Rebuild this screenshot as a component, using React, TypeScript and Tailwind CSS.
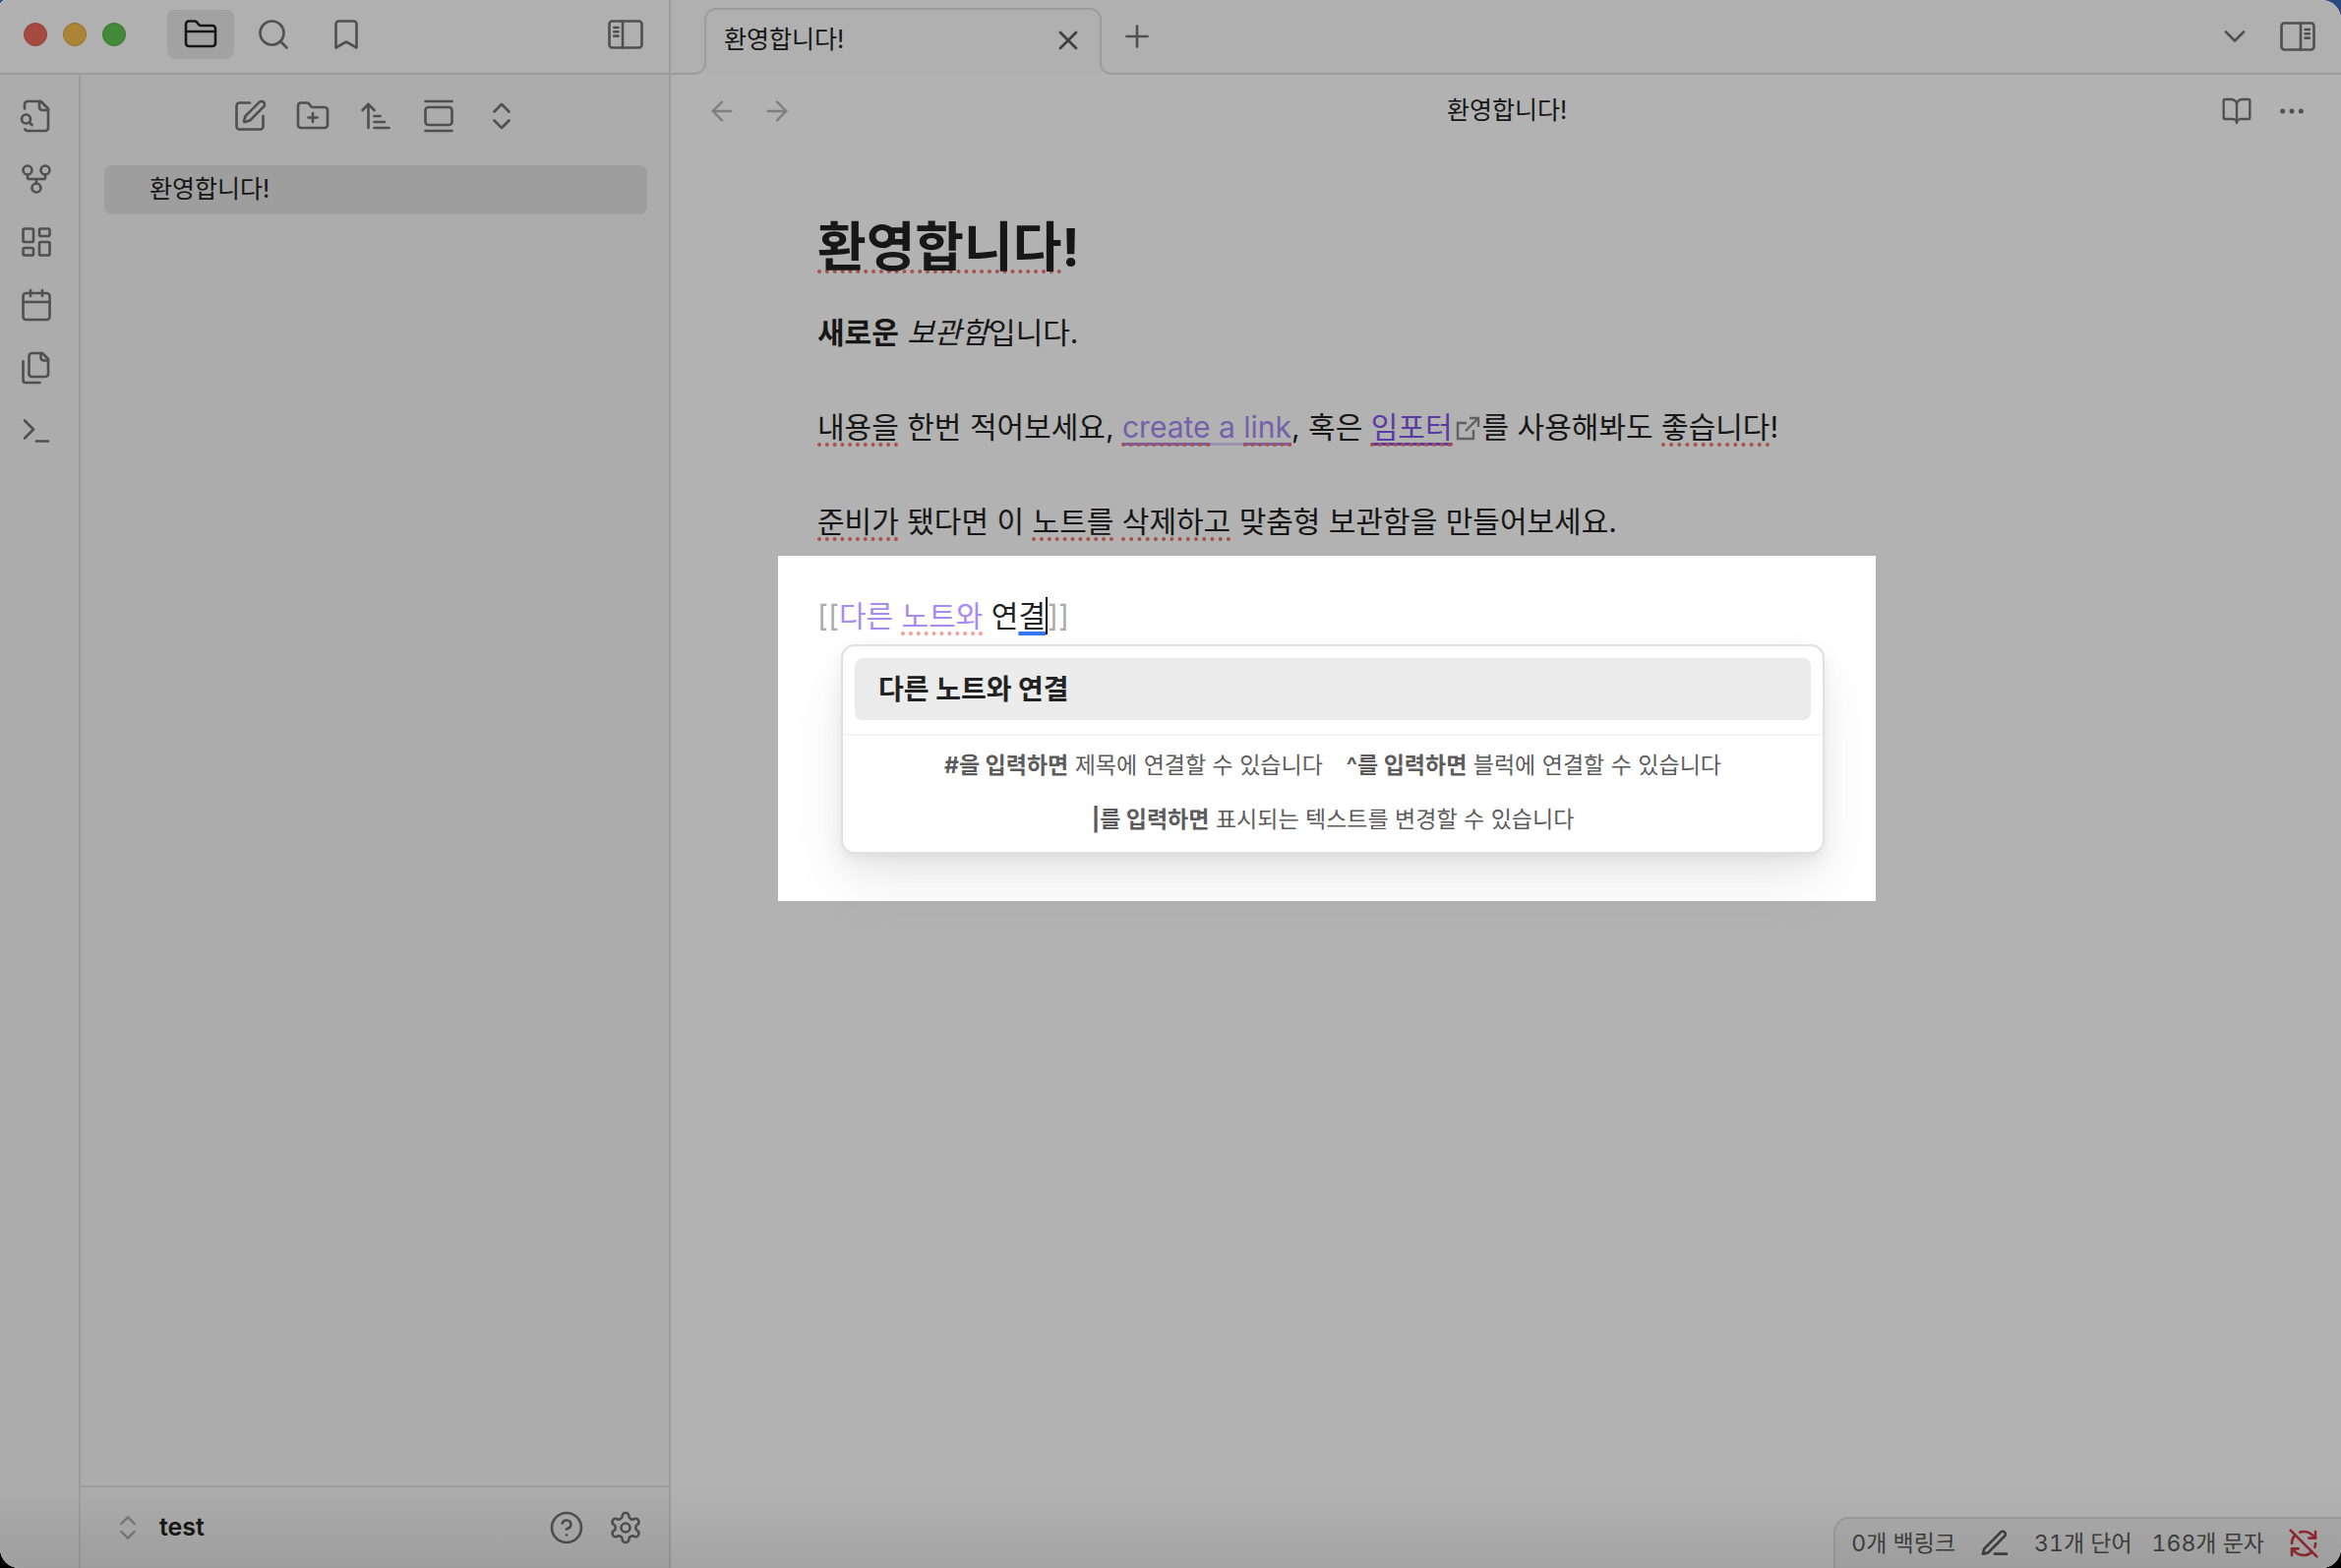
import React from 'react';

const Icon = ({size = 36, stroke = 1.75, children}: { size?: number; stroke?: number; children: React.ReactNode }) => (
    <svg
        width={size}
        height={size}
        viewBox="0 0 24 24"
        fill="none"
        stroke="currentColor"
        strokeWidth={stroke}
        strokeLinecap="round"
        strokeLinejoin="round"
        aria-hidden="true"
        className="shrink-0"
    >
        {children}
    </svg>
);

const IconButton = ({label, className = '', children}: { label: string; className?: string; children: React.ReactNode }) => (
    <button type="button" aria-label={label} className={`flex shrink-0 items-center justify-center ${className}`}>
        {children}
    </button>
);

const ribbonItems = [
    {
        label: '빠른 전환기 열기',
        icon: (
            <>
                <path d="M4.268 21a2 2 0 0 0 1.727 1H18a2 2 0 0 0 2-2V7l-5-5H6a2 2 0 0 0-2 2v3"/>
                <path d="M14 2v4a2 2 0 0 0 2 2h4"/>
                <path d="m9 18-1.5-1.5"/>
                <circle cx="5" cy="14" r="3"/>
            </>
        ),
    },
    {
        label: '그래프 뷰 열기',
        icon: (
            <>
                <circle cx="12" cy="18" r="3"/>
                <circle cx="6" cy="6" r="3"/>
                <circle cx="18" cy="6" r="3"/>
                <path d="M18 9v2c0 .6-.4 1-1 1H7c-.6 0-1-.4-1-1V9"/>
                <path d="M12 12v3"/>
            </>
        ),
    },
    {
        label: '새 캔버스 만들기',
        icon: (
            <>
                <rect width="7" height="9" x="3" y="3" rx="1"/>
                <rect width="7" height="5" x="14" y="3" rx="1"/>
                <rect width="7" height="9" x="14" y="12" rx="1"/>
                <rect width="7" height="5" x="3" y="16" rx="1"/>
            </>
        ),
    },
    {
        label: '오늘의 일일 노트 열기',
        icon: (
            <>
                <path d="M8 2v4"/>
                <path d="M16 2v4"/>
                <rect width="18" height="18" x="3" y="4" rx="2"/>
                <path d="M3 10h18"/>
            </>
        ),
    },
    {
        label: '템플릿 삽입',
        icon: (
            <>
                <path d="M20 7h-3a2 2 0 0 1-2-2V2"/>
                <path d="M9 18a2 2 0 0 1-2-2V4a2 2 0 0 1 2-2h7l4 4v10a2 2 0 0 1-2 2Z"/>
                <path d="M3 7.6v12.8A1.6 1.6 0 0 0 4.6 22h9.8"/>
            </>
        ),
    },
    {
        label: '명령어 팔레트 열기',
        icon: (
            <>
                <path d="m4 17 6-6-6-6"/>
                <path d="M12 19h8"/>
            </>
        ),
    },
];

const navItems = [
    {
        label: '새 노트',
        icon: (
            <>
                <path d="M12 3H5a2 2 0 0 0-2 2v14a2 2 0 0 0 2 2h14a2 2 0 0 0 2-2v-7"/>
                <path d="M18.375 2.625a1 1 0 0 1 3 3l-9.013 9.014a2 2 0 0 1-.853.505l-2.873.84a.5.5 0 0 1-.62-.62l.84-2.873a2 2 0 0 1 .506-.852z"/>
            </>
        ),
    },
    {
        label: '새 폴더',
        icon: (
            <>
                <path d="M12 10v6"/>
                <path d="M9 13h6"/>
                <path d="M20 20a2 2 0 0 0 2-2V8a2 2 0 0 0-2-2h-7.9a2 2 0 0 1-1.69-.9L9.6 3.9A2 2 0 0 0 7.93 3H4a2 2 0 0 0-2 2v13a2 2 0 0 0 2 2Z"/>
            </>
        ),
    },
    {
        label: '정렬 순서 변경',
        icon: (
            <>
                <path d="m3 8 4-4 4 4"/>
                <path d="M7 4v16"/>
                <path d="M11 12h4"/>
                <path d="M11 16h7"/>
                <path d="M11 20h10"/>
            </>
        ),
    },
    {
        label: '현재 파일 자동 표시',
        icon: (
            <>
                <path d="M3 2h18"/>
                <rect width="18" height="12" x="3" y="6" rx="2"/>
                <path d="M3 22h18"/>
            </>
        ),
    },
    {
        label: '모두 펼치기',
        icon: (
            <>
                <path d="m7 15 5 5 5-5"/>
                <path d="m7 9 5-5 5 5"/>
            </>
        ),
    },
];

const SidebarHeader = () => (
    <header className="flex h-[76px] shrink-0 items-center border-b-2 border-[#e0e0e0] bg-[#fcfcfc] pb-1 pl-6 pr-[26px] text-[#737373]">
        <div className="flex gap-4">
            <span className="size-6 rounded-full border border-[#d8574c] bg-[#ec6a5e]"/>
            <span className="size-6 rounded-full border border-[#dba23a] bg-[#f4bf4f]"/>
            <span className="size-6 rounded-full border border-[#4dab3f] bg-[#61c554]"/>
        </div>
        <div className="ml-[42px] flex gap-[6px]">
            <IconButton label="파일" className="h-[50px] w-[68px] rounded-lg bg-[#e8e8e8] text-[#222222]">
                <Icon>
                    <path d="M20 20a2 2 0 0 0 2-2V8a2 2 0 0 0-2-2h-7.9a2 2 0 0 1-1.69-.9L9.6 3.9A2 2 0 0 0 7.93 3H4a2 2 0 0 0-2 2v13a2 2 0 0 0 2 2Z"/>
                    <path d="M2 10h20"/>
                </Icon>
            </IconButton>
            <IconButton label="검색" className="h-[50px] w-[68px]">
                <Icon>
                    <circle cx="11" cy="11" r="8"/>
                    <path d="m21 21-4.3-4.3"/>
                </Icon>
            </IconButton>
            <IconButton label="북마크" className="h-[50px] w-[68px]">
                <Icon>
                    <path d="m19 21-7-4-7 4V5a2 2 0 0 1 2-2h10a2 2 0 0 1 2 2v16z"/>
                </Icon>
            </IconButton>
        </div>
        <IconButton label="왼쪽 사이드바 접기" className="ml-auto">
            <Icon>
                <rect width="22" height="18" x="1" y="3" rx="2"/>
                <path d="M10 3v18"/>
                <path d="M4.2 7.3h2.8M4.2 10.2h2.8M4.2 13.1h2.8"/>
            </Icon>
        </IconButton>
    </header>
);

const Ribbon = () => (
    <nav className="flex w-[82px] shrink-0 flex-col items-center gap-7 border-r-2 border-[#e0e0e0] pr-[6px] pt-6 text-[#737373]">
        {ribbonItems.map((item) => (
            <IconButton key={item.label} label={item.label}>
                <Icon>{item.icon}</Icon>
            </IconButton>
        ))}
    </nav>
);

const FileExplorer = () => (
    <div className="flex min-w-0 flex-1 flex-col">
        <div className="flex justify-center gap-7 pl-[2px] pt-6 text-[#737373]">
            {navItems.map((item) => (
                <IconButton key={item.label} label={item.label}>
                    <Icon>{item.icon}</Icon>
                </IconButton>
            ))}
        </div>
        <div className="flex-1 pl-6 pr-[22px] pt-8">
            <button type="button" className="flex h-[50px] w-full items-center rounded-lg bg-[#e3e3e3] pl-[46px] text-[25px]">
                환영합니다!
            </button>
        </div>
        <div className="flex h-[84px] shrink-0 items-center border-t-2 border-[#e0e0e0] pl-8 pr-[26px] text-[#737373]">
            <button type="button" className="flex items-center gap-4">
                <span className="text-[#ababab]">
                    <Icon size={32}>
                        <path d="m7 15 5 5 5-5"/>
                        <path d="m7 9 5-5 5 5"/>
                    </Icon>
                </span>
                <span className="text-[25px] font-semibold text-[#222222]">test</span>
            </button>
            <div className="ml-auto flex gap-6">
                <IconButton label="도움말">
                    <Icon>
                        <circle cx="12" cy="12" r="10"/>
                        <path d="M9.09 9a3 3 0 0 1 5.83 1c0 2-3 3-3 3"/>
                        <path d="M12 17h.01"/>
                    </Icon>
                </IconButton>
                <IconButton label="설정">
                    <Icon>
                        <path d="M12.22 2h-.44a2 2 0 0 0-2 2v.18a2 2 0 0 1-1 1.73l-.43.25a2 2 0 0 1-2 0l-.15-.08a2 2 0 0 0-2.73.73l-.22.38a2 2 0 0 0 .73 2.73l.15.1a2 2 0 0 1 1 1.72v.51a2 2 0 0 1-1 1.74l-.15.09a2 2 0 0 0-.73 2.73l.22.38a2 2 0 0 0 2.73.73l.15-.08a2 2 0 0 1 2 0l.43.25a2 2 0 0 1 1 1.73V20a2 2 0 0 0 2 2h.44a2 2 0 0 0 2-2v-.18a2 2 0 0 1 1-1.73l.43-.25a2 2 0 0 1 2 0l.15.08a2 2 0 0 0 2.73-.73l.22-.39a2 2 0 0 0-.73-2.73l-.15-.08a2 2 0 0 1-1-1.74v-.5a2 2 0 0 1 1-1.74l.15-.09a2 2 0 0 0 .73-2.73l-.22-.38a2 2 0 0 0-2.73-.73l-.15.08a2 2 0 0 1-2 0l-.43-.25a2 2 0 0 1-1-1.73V4a2 2 0 0 0-2-2z"/>
                        <circle cx="12" cy="12" r="3"/>
                    </Icon>
                </IconButton>
            </div>
        </div>
    </div>
);

const TabBar = () => (
    <header className="flex h-[76px] shrink-0 bg-[#fcfcfc] text-[#737373]">
        <div className="h-14 w-9 shrink-0 self-end rounded-br-xl border-b-2 border-r-2 border-[#e0e0e0]"/>
        {/* 활성 탭 */}
        <div className="-ml-[2px] mt-2 flex h-14 w-[404px] shrink-0 items-center justify-between rounded-t-xl border-x-2 border-t-2 border-[#e0e0e0] pl-[18px] pr-4 pt-2 text-[#222222]">
            <span className="text-[25px]">환영합니다!</span>
            <IconButton label="닫기" className="text-[#5c5c5c]">
                <Icon size={32} stroke={2}>
                    <path d="M18 6 6 18"/>
                    <path d="m6 6 12 12"/>
                </Icon>
            </IconButton>
        </div>
        <div className="-ml-[2px] flex h-14 flex-1 items-center self-end rounded-bl-xl border-b-2 border-l-2 border-[#e0e0e0] pb-5 pl-[18px] pr-[26px]">
            <IconButton label="새 탭">
                <Icon>
                    <path d="M5 12h14"/>
                    <path d="M12 5v14"/>
                </Icon>
            </IconButton>
            <div className="ml-auto flex gap-7">
                <IconButton label="탭 목록">
                    <Icon>
                        <path d="m6 9 6 6 6-6"/>
                    </Icon>
                </IconButton>
                <IconButton label="오른쪽 사이드바 펼치기">
                    <Icon>
                        <rect width="22" height="18" x="1" y="3" rx="2"/>
                        <path d="M14 3v18"/>
                        <path d="M17.1 7.3h2.8M17.1 10.2h2.8M17.1 13.1h2.8"/>
                    </Icon>
                </IconButton>
            </div>
        </div>
    </header>
);

const ViewHeader = () => (
    <div className="flex h-[74px] shrink-0 items-center pl-9 pr-[34px] text-[#737373]">
        <div className="flex flex-1 gap-6 text-[#b5b5b5]">
            <IconButton label="뒤로">
                <Icon size={32}>
                    <path d="m12 19-7-7 7-7"/>
                    <path d="M19 12H5"/>
                </Icon>
            </IconButton>
            <IconButton label="앞으로">
                <Icon size={32}>
                    <path d="M5 12h14"/>
                    <path d="m12 5 7 7-7 7"/>
                </Icon>
            </IconButton>
        </div>
        <div className="text-[25px] text-[#222222]">환영합니다!</div>
        <div className="flex flex-1 justify-end gap-6">
            <IconButton label="읽기 모드">
                <Icon size={32}>
                    <path d="M12 7v14"/>
                    <path d="M3 18a1 1 0 0 1-1-1V4a1 1 0 0 1 1-1h5a4 4 0 0 1 4 4 4 4 0 0 1 4-4h5a1 1 0 0 1 1 1v13a1 1 0 0 1-1 1h-6a3 3 0 0 0-3 3 3 3 0 0 0-3-3z"/>
                </Icon>
            </IconButton>
            <IconButton label="더보기">
                <Icon size={32}>
                    <circle cx="12" cy="12" r="1"/>
                    <circle cx="19" cy="12" r="1"/>
                    <circle cx="5" cy="12" r="1"/>
                </Icon>
            </IconButton>
        </div>
    </div>
);

// 맞춤법 오류 표시
const Typo = ({children}: { children: React.ReactNode }) => (
    <span className="underline decoration-[#f0756c] decoration-dotted decoration-4 underline-offset-[5px] [text-decoration-skip-ink:none]">
        {children}
    </span>
);

const LinkWord = ({children}: { children: React.ReactNode }) => (
    <span className="underline decoration-[#a88af5] decoration-3 underline-offset-[5px] [text-decoration-skip-ink:none]">
        <Typo>{children}</Typo>
    </span>
);

const SuggestionPopup = () => (
    <div className="absolute left-6 top-[53px] w-[1000px] rounded-[14px] border-2 border-[#e0e0e0] bg-white shadow-[0_4px_8px_rgba(0,0,0,0.04),0_12px_26px_rgba(0,0,0,0.05),0_30px_60px_rgba(0,0,0,0.07)]">
        <div className="px-3 pb-[14px] pt-3">
            <button type="button" className="flex h-[63px] w-full items-center rounded-lg bg-[#ebebeb] pl-6 text-[28px] font-bold">
                다른 노트와 연결
            </button>
        </div>
        <div className="flex flex-wrap justify-center gap-x-6 gap-y-[23px] border-t-2 border-[#f5f5f5] px-5 pb-[17px] pt-[14px] text-[23px] leading-8 text-[#5c5c5c]">
            <div><b>#을 입력하면</b> 제목에 연결할 수 있습니다</div>
            <div><b>^를 입력하면</b> 블럭에 연결할 수 있습니다</div>
            <div><b>|를 입력하면</b> 표시되는 텍스트를 변경할 수 있습니다</div>
        </div>
    </div>
);

const Editor = () => (
    <article className="mx-auto w-full max-w-[1400px] flex-1 pt-[70px] text-[30px] leading-[48px]">
        <h1 className="mb-[30px] text-[54px] font-bold leading-[64px]">
            <span className="underline decoration-[#f0756c] decoration-dotted decoration-4 underline-offset-[3px] [text-decoration-skip-ink:none]">환영합니다</span>!
        </h1>
        <div className="flex flex-col gap-12">
            <p><b>새로운</b> <i>보관함</i>입니다.</p>
            <p>
                <Typo>내용을</Typo> 한번 적어보세요,{' '}
                <a href="#create-a-link" className="text-[#a88af5] underline decoration-[#a88af5]/40 decoration-3 underline-offset-[5px] [text-decoration-skip-ink:none]">
                    <LinkWord>create</LinkWord> a <LinkWord>link</LinkWord>
                </a>
                , 혹은{' '}
                <a href="#importer" className="text-[#8255ea] underline decoration-[#8255ea] decoration-3 underline-offset-[5px] [text-decoration-skip-ink:none]">
                    <Typo>임포터</Typo>
                </a>
                <svg width="30" height="32" viewBox="0 0 30 32" fill="none" stroke="#8c8c8c" strokeWidth="2.4" aria-hidden="true" className="inline-block align-middle">
                    <path d="M14 9H5v16h16v-9"/>
                    <path d="M13 17 26 4"/>
                    <path d="M17 4h9v9"/>
                </svg>
                를 사용해봐도 <Typo>좋습니다</Typo>!
            </p>
            <p><Typo>준비가</Typo> 됐다면 이 <Typo>노트를</Typo> <Typo>삭제하고</Typo> 맞춤형 보관함을 만들어보세요.</p>
            <div className="relative">
                <p className="flex items-center whitespace-pre">
                    <span className="text-[#ababab]">[[</span>
                    <span className="text-[#a88af5]">다른 <span className="underline decoration-[#f5a09a] decoration-dotted decoration-4 underline-offset-[5px] [text-decoration-skip-ink:none]">노트와</span> </span>
                    <span>연</span>
                    <span className="underline decoration-[#3478f6] decoration-4 underline-offset-[5px] [text-decoration-skip-ink:none]">결</span>
                    <span className="h-[38px] w-[2px] bg-black"/>
                    <span className="text-[#ababab]">]]</span>
                </p>
                <SuggestionPopup/>
                {/* 강조 영역: 바깥쪽을 어둡게 덮는다 */}
                <div className="pointer-events-none absolute -left-10 -top-[37px] z-10 h-[351px] w-[1116px] shadow-[0_0_0_3000px_rgba(0,0,0,0.3)]"/>
            </div>
        </div>
    </article>
);

const StatusBar = () => (
    <footer className="flex h-[52px] shrink-0 items-center self-end rounded-tl-2xl border-l-2 border-t-2 border-[#e0e0e0] bg-[#f6f6f6] pl-4 pr-[22px] text-[23px] tabular-nums text-[#5c5c5c]">
        <span>0개 백링크</span>
        <button type="button" aria-label="편집 모드" className="mx-6">
            <Icon size={32} stroke={2}>
                <path d="M12 20h9"/>
                <path d="M16.5 3.5a2.12 2.12 0 0 1 3 3L7 19l-4 1 1-4Z"/>
            </Icon>
        </button>
        <span>31개 단어</span>
        <span className="ml-5">168개 문자</span>
        <button type="button" aria-label="동기화 꺼짐" className="ml-6 text-[#d63a47]">
            <Icon size={32} stroke={2}>
                <path d="M21 8L18.74 5.74A9.75 9.75 0 0 0 12 3C11 3 10.03 3.16 9.13 3.47"/>
                <path d="M8 16H3v5"/>
                <path d="M3 12C3 9.51 4 7.26 5.64 5.64"/>
                <path d="m3 16 2.26 2.26A9.75 9.75 0 0 0 12 21c2.49 0 4.74-1 6.36-2.64"/>
                <path d="M21 12c0 1-.16 1.97-.47 2.87"/>
                <path d="M21 3v5h-5"/>
                <path d="M22 22 2 2"/>
            </Icon>
        </button>
    </footer>
);

const App = () => {
    return (
        <div className="bg-linear-to-b from-[#2b4a80] to-black">
            <div className="relative flex h-screen overflow-hidden rounded-b-[20px] rounded-tl-md rounded-tr-[20px] bg-white font-['Inter','Noto_Sans_CJK_KR',sans-serif] text-[#222222]">
                <aside className="flex w-[682px] shrink-0 flex-col border-r-2 border-[#e0e0e0] bg-[#f6f6f6]">
                    <SidebarHeader/>
                    <div className="flex flex-1">
                        <Ribbon/>
                        <FileExplorer/>
                    </div>
                </aside>
                <main className="flex min-w-0 flex-1 flex-col">
                    <TabBar/>
                    <ViewHeader/>
                    <Editor/>
                    <StatusBar/>
                </main>
                <div className="pointer-events-none absolute inset-x-0 bottom-0 h-20 bg-linear-to-b from-transparent to-black/8"/>
            </div>
        </div>
    );
};

export default App;
